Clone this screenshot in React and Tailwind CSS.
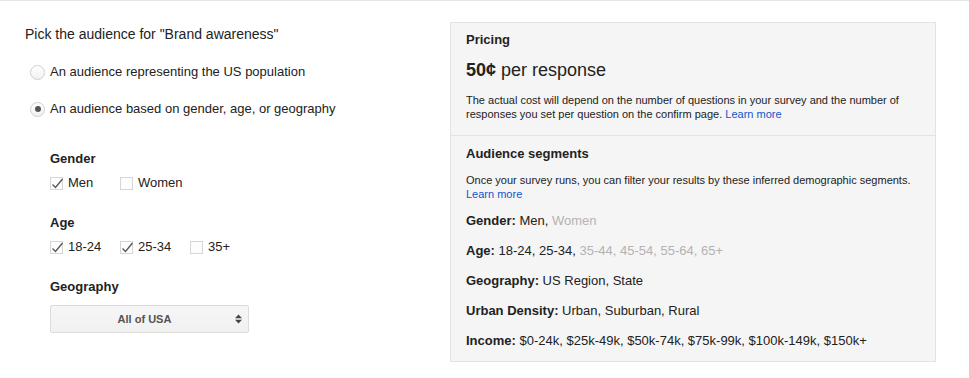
import React from 'react';

const Radio = ({ checked, label }) => (
  <label className="flex h-4 items-center">
    <span className="ml-[5px] flex h-[15px] w-[15px] items-center justify-center rounded-full border border-[#cfcfcf] bg-gradient-to-b from-white to-[#f1f1f1]">
      {checked && <span className="h-[6px] w-[6px] rounded-full bg-[#555]"></span>}
    </span>
    <span className="ml-[5px] text-[13px] leading-4 text-[#222]">{label}</span>
  </label>
);

const Checkbox = ({ checked, label }) => (
  <label className="flex h-4 w-[70px] items-center">
    <span className="relative h-[13px] w-[13px] border border-[#d6d6d6] bg-[#fdfdfd]">
      {checked && (
        <svg className="absolute -left-px -top-[3px]" width="16" height="16" viewBox="0 0 16 16">
          <path d="M2.5 9.5 L5.5 12.5 L12.5 4" fill="none" stroke="#555" strokeWidth="1.3" />
        </svg>
      )}
    </span>
    <span className="ml-[5px] text-[13px] leading-4 text-[#222]">{label}</span>
  </label>
);

const Segment = ({ name, on, off, className }) => (
  <div className={`text-[13px] leading-4 text-[#222] ${className || ''}`}>
    <span className="font-bold">{name}:</span>{' '}
    {on.join(', ')}
    {off.length > 0 && (
      <>
        {', '}
        <span className="text-[#b3b3b3]">{off.join(', ')}</span>
      </>
    )}
  </div>
);

const App = () => {
  return (
    <div className="h-[378px] w-[969px] overflow-hidden border-t border-[#e6e6e6] bg-white font-['Liberation_Sans',Arial,sans-serif]">
      <div className="flex">
        {/* Audience picker */}
        <div className="w-[450px] pl-[25px] pt-[24px]">
          <h1 className="text-[14px] leading-[18px] text-[#222]">Pick the audience for "Brand awareness"</h1>
          <div className="mt-[21px]">
            <Radio label="An audience representing the US population" />
          </div>
          <div className="mt-[21px]">
            <Radio checked label="An audience based on gender, age, or geography" />
          </div>

          <div className="pl-[25px]">
            <div className="mt-[34px] text-[13px] font-bold leading-4 text-[#222]">Gender</div>
            <div className="mt-[8px] flex">
              <Checkbox checked label="Men" />
              <Checkbox label="Women" />
            </div>

            <div className="mt-[24px] text-[13px] font-bold leading-4 text-[#222]">Age</div>
            <div className="mt-[8px] flex">
              <Checkbox checked label="18-24" />
              <Checkbox checked label="25-34" />
              <Checkbox label="35+" />
            </div>

            <div className="mt-[24px] text-[13px] font-bold leading-4 text-[#222]">Geography</div>
            <div className="mt-[10px] flex h-[28px] w-[199px] items-center rounded-[2px] border border-[#dcdcdc] bg-gradient-to-b from-[#f6f6f6] to-[#f1f1f1]">
              <span className="flex-1 pl-[7px] text-center text-[11px] font-bold text-[#555]">All of USA</span>
              <svg className="mr-[6px] ml-[4px]" width="7" height="10" viewBox="0 0 7 10">
                <path d="M3.5 0.5 L7 4.3 L0 4.3 Z" fill="#444" />
                <path d="M0 5.7 L7 5.7 L3.5 9.5 Z" fill="#444" />
              </svg>
            </div>
          </div>
        </div>

        {/* Pricing / segments panel */}
        <div className="mt-[21px] w-[486px] border border-[#e3e3e3] bg-[#f5f5f5]">
          <div className="border-b border-[#e3e3e3] px-[15px] pb-[14px] pt-[9px]">
            <div className="text-[13px] font-bold leading-4 text-[#222]">Pricing</div>
            <div className="mt-[11px] text-[18px] leading-[22px] text-[#222]">
              <span className="font-bold">50¢</span> per response
            </div>
            <p className="mt-[12px] text-[11px] leading-[14px] text-[#222]">
              The actual cost will depend on the number of questions in your survey and the number of responses you set per question on the confirm page.{' '}
              <a className="text-[#15c]">Learn more</a>
            </p>
          </div>
          <div className="px-[15px] pb-[12px] pt-[10px]">
            <div className="text-[13px] font-bold leading-4 text-[#222]">Audience segments</div>
            <p className="mt-[11px] text-[11px] leading-[14px] text-[#222]">
              Once your survey runs, you can filter your results by these inferred demographic segments.{' '}
              <a className="text-[#15c]">Learn more</a>
            </p>
            <Segment className="mt-[12px]" name="Gender" on={['Men']} off={['Women']} />
            <Segment className="mt-[14px]" name="Age" on={['18-24', '25-34']} off={['35-44', '45-54', '55-64', '65+']} />
            <Segment className="mt-[14px]" name="Geography" on={['US Region', 'State']} off={[]} />
            <Segment className="mt-[14px]" name="Urban Density" on={['Urban', 'Suburban', 'Rural']} off={[]} />
            <Segment className="mt-[14px]" name="Income" on={['$0-24k', '$25k-49k', '$50k-74k', '$75k-99k', '$100k-149k', '$150k+']} off={[]} />
          </div>
        </div>
      </div>
    </div>
  );
};

export default App;
